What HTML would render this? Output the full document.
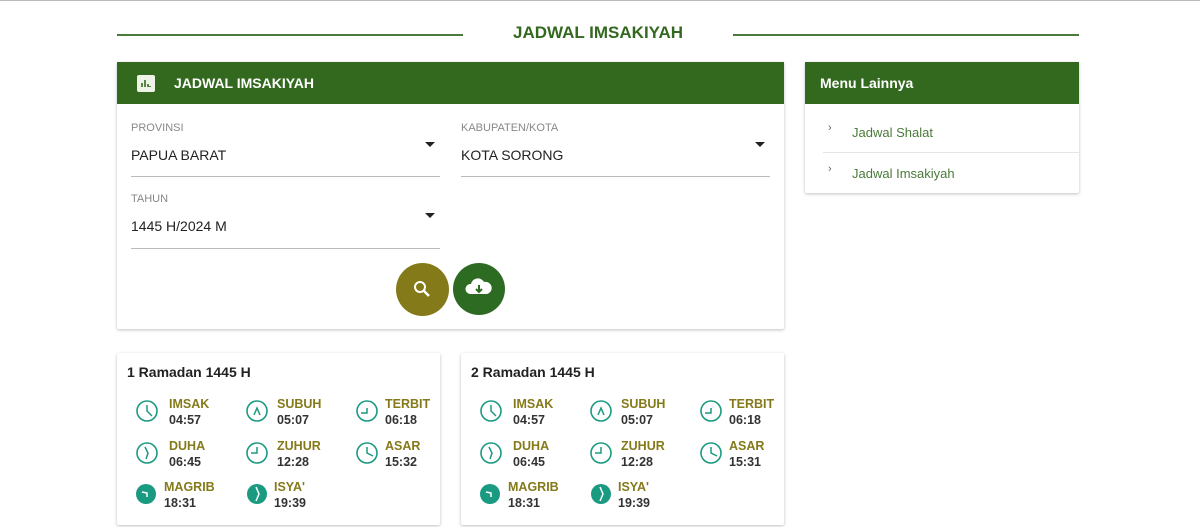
<!DOCTYPE html>
<html><head><meta charset="utf-8"><style>
*{margin:0;padding:0;box-sizing:border-box}
body{width:1200px;height:527px;overflow:hidden;background:#fff;font-family:"Liberation Sans",Arial,sans-serif;position:relative;border-top:1px solid #bbb}
.abs{position:absolute}
.line{position:absolute;height:2px;background:#4b7a3a;top:33px}
.title{position:absolute;top:22px;left:463px;width:270px;text-align:center;color:#33691e;font-weight:bold;font-size:17px}
.card{position:absolute;background:#fff;box-shadow:0 1px 3px rgba(0,0,0,.25);border-radius:2px}
.hdr{background:#33691e;color:#fff;font-weight:bold;font-size:14px;height:42px;line-height:42px}
.lbl{font-size:11px;color:#888}
.val{font-size:14px;color:#222}
.sel{position:absolute;border-bottom:1px solid #bbb}
.caret{position:absolute;width:0;height:0;border-left:5px solid transparent;border-right:5px solid transparent;border-top:5px solid #222}
.pn{position:absolute;font-weight:bold;font-size:12.5px;color:#857a1a}
.pt{position:absolute;font-weight:bold;font-size:12.5px;color:#333}
.ck{position:absolute}
.menu{position:absolute;left:852px;font-size:13px;color:#4a7a3a}
</style></head><body>
<div class="line" style="left:117px;width:346px"></div>
<div class="line" style="left:733px;width:346px"></div>
<div class="title">JADWAL IMSAKIYAH</div>

<div class="card" style="left:117px;top:61px;width:667px;height:267px">
<div class="hdr" style="padding-left:57px">JADWAL IMSAKIYAH</div>
<div class="abs" style="left:20px;top:13px;width:18px;height:17px;background:#eef3e8;border-radius:2px"><svg width="18" height="17"><path d="M5 12V8M8 12V5M11 12V9M13 12V11" stroke="#33691e" stroke-width="1.6"/></svg></div>
<div class="sel" style="left:14px;top:60px;width:309px;height:55px"><div class="lbl">PROVINSI</div><div class="val" style="margin-top:13px">PAPUA BARAT</div><div class="caret" style="right:5px;top:20px"></div></div>
<div class="sel" style="left:344px;top:60px;width:309px;height:55px"><div class="lbl">KABUPATEN/KOTA</div><div class="val" style="margin-top:13px">KOTA SORONG</div><div class="caret" style="right:5px;top:20px"></div></div>
<div class="sel" style="left:14px;top:131px;width:309px;height:56px"><div class="lbl">TAHUN</div><div class="val" style="margin-top:13px">1445 H/2024 M</div><div class="caret" style="right:5px;top:20px"></div></div>
<div class="abs" style="left:279px;top:201px;width:53px;height:53px;border-radius:50%;background:#857a1a"><svg width="53" height="53"><circle cx="24" cy="24" r="5" fill="none" stroke="#fff" stroke-width="2"/><path d="M28 28l5 5" stroke="#fff" stroke-width="2.5"/></svg></div>
<div class="abs" style="left:336px;top:201px;width:52px;height:52px;border-radius:50%;background:#2e6b22"><svg width="52" height="52"><path d="M17 31a5 5 0 0 1 1-10a7 7 0 0 1 13-2a6 6 0 0 1 3 12z" fill="#fff"/><path d="M26 22v6M23 26l3 3 3-3" stroke="#2e6b22" stroke-width="2" fill="none"/></svg></div>
</div>

<div class="card" style="left:805px;top:61px;width:274px;height:131px">
<div class="hdr" style="padding-left:15px;font-size:14px">Menu Lainnya</div>
<div class="abs" style="left:18px;top:90px;width:256px;height:1px;background:#e5e5e5"></div>
</div>
<div class="abs" style="left:828px;top:121px;font-size:11px;color:#666">›</div>
<div class="menu" style="top:124px">Jadwal Shalat</div>
<div class="abs" style="left:828px;top:162px;font-size:11px;color:#666">›</div>
<div class="menu" style="top:165px">Jadwal Imsakiyah</div>

<div id="cards"></div>
<script>
const data=[["1 Ramadan 1445 H",117,["04:57","05:07","06:18","06:45","12:28","15:32","18:31","19:39"]],["2 Ramadan 1445 H",461,["04:57","05:07","06:18","06:45","12:28","15:31","18:31","19:39"]]];
const names=["IMSAK","SUBUH","TERBIT","DUHA","ZUHUR","ASAR","MAGRIB","ISYA'"];
const hands=["M0 -6L0 0L5 5","M-3 4L0 -3L3 4","M-6 2L0 2L0 -3","M-2 -6L1 0L-1 6","M-6 0L0 0L0 -6","M0 -6L0 0L6 3","M-4 -2L1 -1L1 3","M-1 -7L2 0L-1 7"];
let h="";
data.forEach(([t,x,times])=>{
h+=`<div class="card" style="left:${x}px;top:352px;width:323px;height:172px"></div>`;
h+=`<div class="abs" style="left:${x+10}px;top:363px;font-size:14px;font-weight:bold;color:#222">${t}</div>`;
times.forEach((tm,i)=>{
const col=i%3,row=Math.floor(i/3);
let cx=x+30+col*110, cy=410+row*42, tx=x+52+col*108;
let filled=i>=6;
if(filled){cx=x+30+col*111-1;tx=x+47+col*110;cy=493;}
h+=`<svg class="ck" style="left:${cx-12}px;top:${cy-12}px" width="24" height="24"><g transform="translate(12 12)">${filled?'<circle r="10" fill="#1a9a80"/>':'<circle r="10" fill="none" stroke="#1a9a80" stroke-width="1.6"/>'}<path d="${hands[i]}" fill="none" stroke="${filled?'#fff':'#1a9a80'}" stroke-width="1.5"/></g></svg>`;
let ly=row==2?479:396+row*42;
h+=`<div class="pn" style="left:${tx}px;top:${ly}px">${names[i]}</div><div class="pt" style="left:${tx}px;top:${ly+16}px">${tm}</div>`;
});
});
document.getElementById("cards").innerHTML=h;
</script>
</body></html>
